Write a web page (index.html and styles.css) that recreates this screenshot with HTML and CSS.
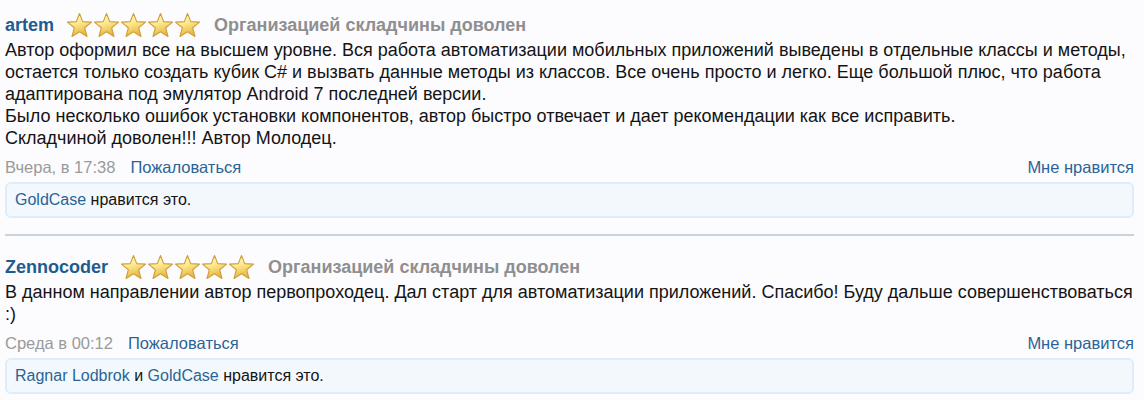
FILE: index.html
```html
<!DOCTYPE html>
<html lang="ru">
<head>
<meta charset="utf-8">
<link rel="stylesheet" href="styles.css">
</head>
<body>
<svg width="0" height="0" class="defs">
  <defs>
    <linearGradient id="sg" x1="0" y1="0" x2="0.3" y2="1">
      <stop offset="0" stop-color="#fffde6"/>
      <stop offset="0.5" stop-color="#fde98f"/>
      <stop offset="1" stop-color="#e8b742"/>
    </linearGradient>
    <symbol id="star" viewBox="0 0 26 26">
      <path d="M13 1.5 L16.1 9.3 L24.6 9.8 L18 15.2 L20.2 23.6 L13 19 L5.8 23.6 L8 15.2 L1.4 9.8 L9.9 9.3 Z" fill="url(#sg)" stroke="#cf9f3a" stroke-width="1.1" stroke-linejoin="round"/>
    </symbol>
  </defs>
</svg>
<div class="thread">
  <div class="post">
    <div class="post-head">
      <a class="user" href="#">artem</a>
      <span class="stars">
        <svg class="star"><use href="#star"/></svg><svg class="star"><use href="#star"/></svg><svg class="star"><use href="#star"/></svg><svg class="star"><use href="#star"/></svg><svg class="star"><use href="#star"/></svg>
      </span>
      <span class="title">Организацией складчины доволен</span>
    </div>
    <div class="text">Автор оформил все на высшем уровне. Вся работа автоматизации мобильных приложений выведены в отдельные классы и методы, остается только создать кубик C# и вызвать данные методы из классов. Все очень просто и легко. Еще большой плюс, что работа адаптирована под эмулятор Android 7 последней версии.<br>Было несколько ошибок установки компонентов, автор быстро отвечает и дает рекомендации как все исправить.<br>Складчиной доволен!!! Автор Молодец.</div>
    <div class="meta">
      <span class="date">Вчера, в 17:38</span>
      <a class="link" href="#">Пожаловаться</a>
      <a class="link like" href="#">Мне нравится</a>
    </div>
    <div class="likes"><a class="link" href="#">GoldCase</a> нравится это.</div>
  </div>
  <div class="post">
    <div class="post-head">
      <a class="user" href="#">Zennocoder</a>
      <span class="stars">
        <svg class="star"><use href="#star"/></svg><svg class="star"><use href="#star"/></svg><svg class="star"><use href="#star"/></svg><svg class="star"><use href="#star"/></svg><svg class="star"><use href="#star"/></svg>
      </span>
      <span class="title">Организацией складчины доволен</span>
    </div>
    <div class="text">В данном направлении автор первопроходец. Дал старт для автоматизации приложений. Спасибо! Буду дальше совершенствоваться :)</div>
    <div class="meta">
      <span class="date">Среда в 00:12</span>
      <a class="link" href="#">Пожаловаться</a>
      <a class="link like" href="#">Мне нравится</a>
    </div>
    <div class="likes"><a class="link" href="#">Ragnar Lodbrok</a> и <a class="link" href="#">GoldCase</a> нравится это.</div>
  </div>
</div>
</body>
</html>
```
FILE: styles.css
```css
html, body {
  margin: 0;
  padding: 0;
  background: #fcfcff;
}
body {
  font-family: "Liberation Sans", Arial, sans-serif;
  color: #141414;
}
.defs {
  position: absolute;
  width: 0;
  height: 0;
}
a {
  text-decoration: none;
}
.thread {
  padding: 0 10px 0 5px;
}
.post {
  padding-top: 12px;
}
.post + .post {
  border-top: 2px solid #c8d3de;
  margin-top: 16px;
  padding-top: 18px;
}
.post-head {
  display: flex;
  align-items: center;
  height: 27px;
}
.user {
  font-weight: bold;
  font-size: 18px;
  color: #1d5b91;
}
.stars {
  display: flex;
  margin-left: 12px;
}
.star {
  width: 27px;
  height: 27px;
}
.title {
  margin-left: 13px;
  font-weight: bold;
  font-size: 18px;
  color: #8f8f8f;
}
.text {
  font-size: 18px;
  line-height: 22px;
}
.meta {
  display: flex;
  margin-top: 8px;
  font-size: 16.5px;
  line-height: 20px;
}
.date {
  color: #9a9a9a;
}
.link {
  color: #2a6496;
}
.meta .link {
  margin-left: 15px;
}
.meta .like {
  margin-left: auto;
}
.likes {
  margin-top: 5px;
  height: 32px;
  border: 2px solid #dcedfb;
  border-radius: 6px;
  background: #f3f8fd;
  font-size: 16px;
  line-height: 32px;
  padding-left: 8px;
}
```
